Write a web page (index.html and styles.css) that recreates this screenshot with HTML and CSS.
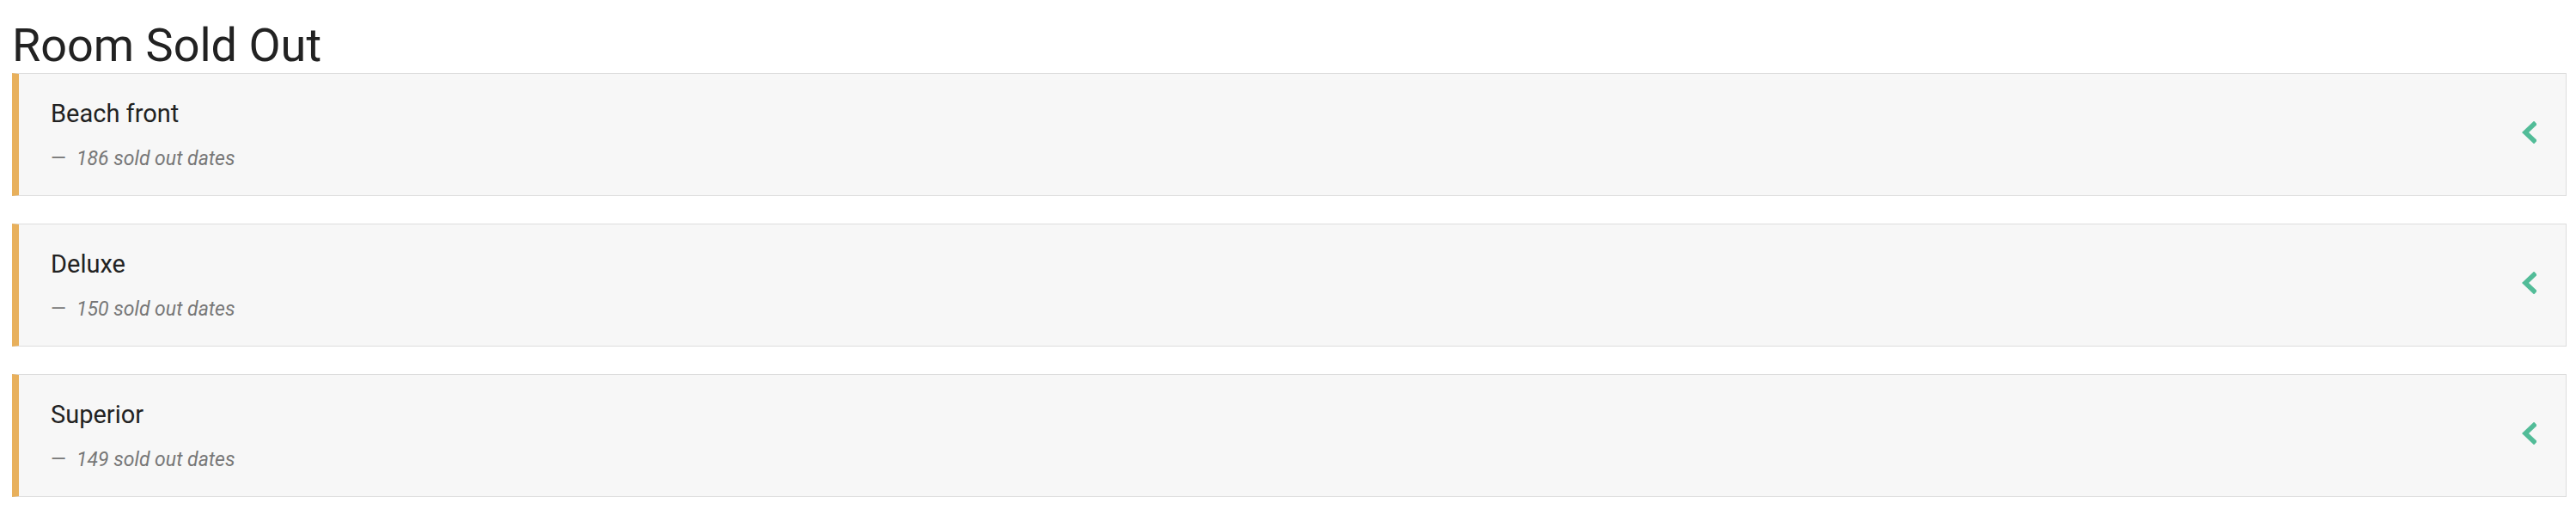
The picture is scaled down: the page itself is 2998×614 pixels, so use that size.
FILE: index.html
```html
<!DOCTYPE html>
<html lang="en">
<head>
<meta charset="utf-8">
<title>Room Sold Out</title>
<link rel="stylesheet" href="styles.css">
</head>
<body>
<div class="page">
  <h1 class="page-title">Room Sold Out</h1>
  <div class="room-list">
    <div class="room-card">
      <div class="room-info">
        <div class="room-name">Beach front</div>
        <div class="room-meta"><span class="dash">—</span>186 sold out dates</div>
      </div>
      <svg class="chevron" width="17" height="26" viewBox="0 0 17 26"><polyline points="14,3.5 4,13 14,22.5" fill="none" stroke="#52bc98" stroke-width="5.5" stroke-linejoin="miter" stroke-linecap="square"/></svg>
    </div>
    <div class="room-card">
      <div class="room-info">
        <div class="room-name">Deluxe</div>
        <div class="room-meta"><span class="dash">—</span>150 sold out dates</div>
      </div>
      <svg class="chevron" width="17" height="26" viewBox="0 0 17 26"><polyline points="14,3.5 4,13 14,22.5" fill="none" stroke="#52bc98" stroke-width="5.5" stroke-linejoin="miter" stroke-linecap="square"/></svg>
    </div>
    <div class="room-card">
      <div class="room-info">
        <div class="room-name">Superior</div>
        <div class="room-meta"><span class="dash">—</span>149 sold out dates</div>
      </div>
      <svg class="chevron" width="17" height="26" viewBox="0 0 17 26"><polyline points="14,3.5 4,13 14,22.5" fill="none" stroke="#52bc98" stroke-width="5.5" stroke-linejoin="miter" stroke-linecap="square"/></svg>
    </div>
  </div>
</div>
</body>
</html>
```
FILE: styles.css
```css
html, body {
  margin: 0;
  padding: 0;
  background: #ffffff;
}
body {
  font-family: Roboto, "Liberation Sans", Arial, sans-serif;
  color: #222222;
}
.page {
  padding: 20px 11px 0 14px;
}
.page-title {
  margin: 0;
  font-size: 54px;
  font-weight: 400;
  line-height: 65px;
  color: #222222;
}
.room-list {
  display: flex;
  flex-direction: column;
  gap: 32px;
}
.room-card {
  display: flex;
  align-items: center;
  justify-content: space-between;
  background: #f7f7f7;
  border: 1px solid #dddddd;
  border-left: 8px solid #e8b05c;
  padding: 29px 34px 29px 37px;
  height: 143px;
  box-sizing: border-box;
}
.room-info {
  display: flex;
  flex-direction: column;
  gap: 22px;
}
.room-name {
  font-size: 29px;
  line-height: 34px;
  color: #222222;
}
.room-meta {
  font-size: 23px;
  line-height: 27px;
  font-style: italic;
  color: #777777;
}
.dash {
  font-style: normal;
  margin-right: 12px;
}
.chevron {
  display: block;
  margin-top: -5px;
}
```
